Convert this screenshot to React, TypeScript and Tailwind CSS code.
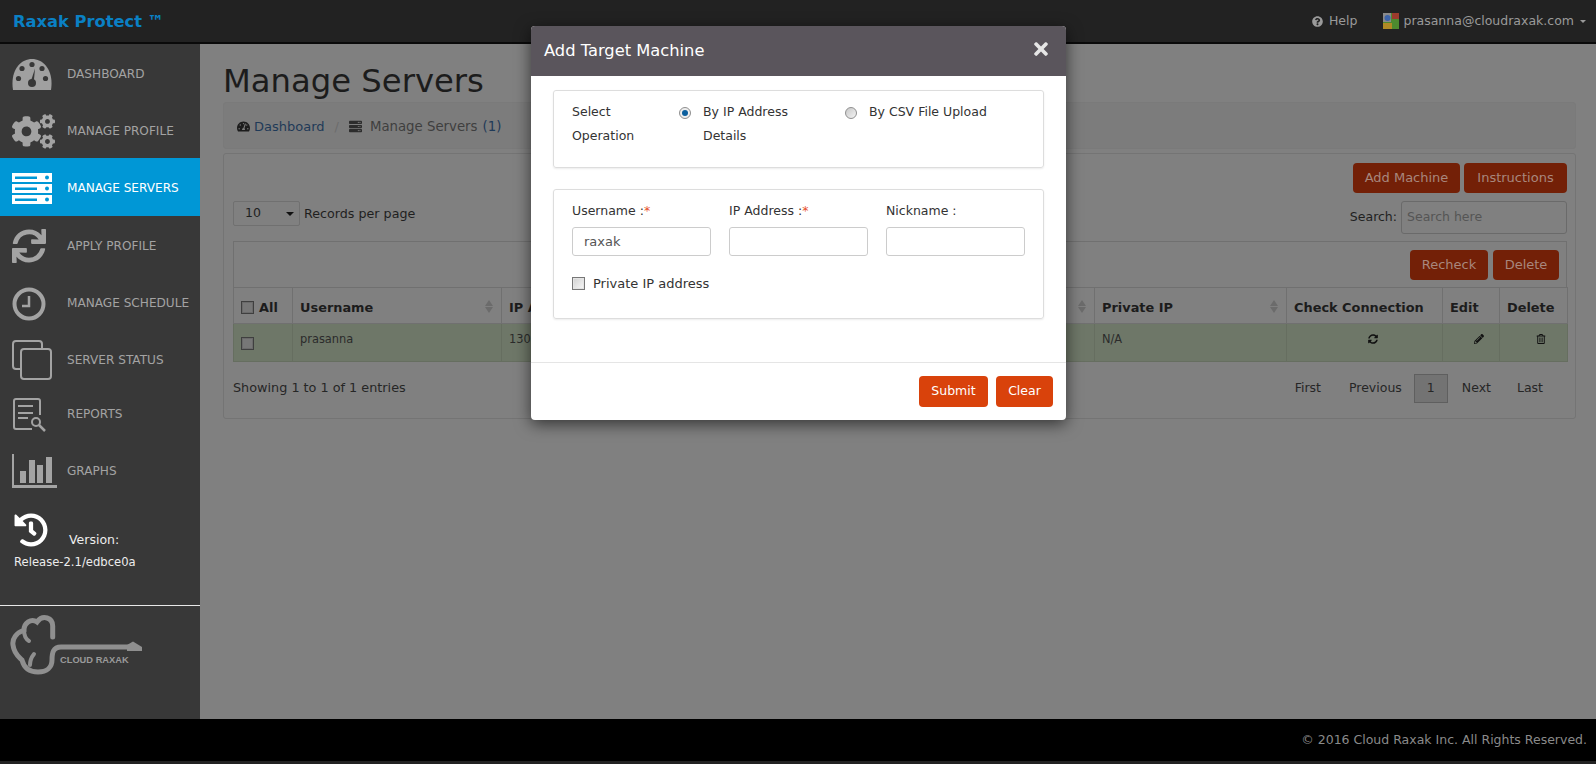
import type { ReactNode } from "react";
import {
  FaCogs,
  FaHistory,
  FaPencilAlt,
  FaQuestionCircle,
  FaRegTrashAlt,
  FaServer,
  FaSync,
  FaSyncAlt,
  FaTachometerAlt,
  FaTimes,
} from "react-icons/fa";

const GaugeIcon = () => (
  <svg width="40" height="31" viewBox="0 0 40 31">
    <path d="M1 31 C-2 12 8 0 20 0 C32 0 42 12 39 31 Z" fill="#a0a0a0" />
    <circle cx="20" cy="5.5" r="2.6" fill="#383838" />
    <circle cx="10" cy="9.5" r="2.6" fill="#383838" />
    <circle cx="30" cy="9.5" r="2.6" fill="#383838" />
    <circle cx="6.5" cy="19.5" r="2.6" fill="#383838" />
    <circle cx="33.5" cy="19.5" r="2.6" fill="#383838" />
    <circle cx="20" cy="24" r="4" fill="#383838" />
    <path d="M18.6 23 L23 9.5 L21.8 23 Z" fill="#383838" />
  </svg>
);

const ServersIcon = () => (
  <svg width="40" height="31" viewBox="0 0 40 31">
    {[0, 11, 22].map((y) => (
      <g key={y}>
        <rect x="0" y={y} width="40" height="9" fill="#fff" />
        <rect x="3" y={y + 3.5} width="22" height="2.5" fill="#0097d6" />
        <circle cx="35" cy={y + 4.5} r="2" fill="#0097d6" />
      </g>
    ))}
  </svg>
);

const ClockIcon = () => (
  <svg width="34" height="34" viewBox="0 0 34 34" fill="none" stroke="#a3a3a3">
    <circle cx="17" cy="17" r="14.5" strokeWidth="4" />
    <path d="M17 9 V19 H10" strokeWidth="2.5" />
  </svg>
);

const StatusIcon = () => (
  <svg width="40" height="40" viewBox="0 0 40 40" fill="none" stroke="#a3a3a3" strokeWidth="2">
    <path d="M8 29 H4 Q1 29 1 26 V4 Q1 1 4 1 H27 Q30 1 30 4 V9" />
    <rect x="9" y="9" width="30" height="30" rx="3" />
  </svg>
);

const ReportsIcon = () => (
  <svg width="34" height="34" viewBox="0 0 34 34" fill="none" stroke="#a3a3a3" strokeWidth="2">
    <path d="M20 31 H4 Q2 31 2 29 V3 Q2 1 4 1 H26 Q28 1 28 3 V17" />
    <path d="M6 8 H21 M6 15 H21 M6 20 H16" />
    <circle cx="24" cy="24" r="4" />
    <path d="M27 27 L33 33" strokeWidth="2.5" />
  </svg>
);

const GraphsIcon = () => (
  <svg width="45" height="34" viewBox="0 0 45 34" fill="#a3a3a3">
    <path d="M0 0 H2 V31 H45 V34 H0 Z" />
    <rect x="8" y="17" width="6" height="12" />
    <rect x="17" y="6" width="6" height="23" />
    <rect x="25" y="11" width="6" height="18" />
    <rect x="34" y="3" width="6" height="26" />
  </svg>
);

const CloudLogo = () => (
  <svg width="136" height="64" viewBox="0 0 136 64" fill="none">
    <path
      d="M42.7 23 V12 C42.7 4 33 0 27 8 C21 4 14 9 14 16 C6 19 2 25 3 31 C4 40 9 43 12 46 C14 54 20 58 28 58 C37 58 42 53 42 46 C42 39 43 33 51 33 H122"
      stroke="#8f8f8f"
      strokeWidth="5"
      strokeLinecap="round"
    />
    <path d="M14 16 Q14 24 19 27 M24 40 Q20 45 20 51" stroke="#8f8f8f" strokeWidth="4" strokeLinecap="round" />
    <path d="M117 31 L123 27.5 L132 33 V37 H117 Z" fill="#8f8f8f" />
    <text x="50" y="49" fill="#9a9a9a" fontSize="9.3" fontWeight="700" fontFamily="'Liberation Sans', sans-serif">
      CLOUD RAXAK
    </text>
  </svg>
);

const navItems: { label: string; icon: ReactNode; cls: string; active?: boolean }[] = [
  { label: "DASHBOARD", icon: <GaugeIcon />, cls: "h-[57px] pt-[4px]" },
  { label: "MANAGE PROFILE", icon: <FaCogs size={43} color="#a3a3a3" />, cls: "h-[57px] pt-[4px]" },
  { label: "MANAGE SERVERS", icon: <ServersIcon />, cls: "h-[58px] pt-[2px]", active: true },
  { label: "APPLY PROFILE", icon: <FaSync size={34} color="#a3a3a3" />, cls: "h-[58px] pt-[2px]" },
  { label: "MANAGE SCHEDULE", icon: <ClockIcon />, cls: "h-[57px] pt-[2px]" },
  { label: "SERVER STATUS", icon: <StatusIcon />, cls: "h-[56px] pt-[2px]" },
  { label: "REPORTS", icon: <ReportsIcon />, cls: "h-[53px] pt-[2px]" },
  { label: "GRAPHS", icon: <GraphsIcon />, cls: "h-[58px] pt-[4px]" },
];

const Box = ({ dim }: { dim?: boolean }) => (
  <span
    className={
      dim
        ? "inline-block w-[13px] h-[13px] border border-[#3f3f3f] bg-[#777] shadow-[inset_0_0_0_1px_#6a6a6a]"
        : "inline-block w-[13px] h-[13px] border border-[#777777] bg-gradient-to-br from-[#d0d0d0] to-[#f8f8f8] shadow-[inset_0_0_0_1px_#e4e4e4]"
    }
  />
);

const SortArrows = () => (
  <span className="absolute right-[8px] top-[12px] flex flex-col gap-[1px]">
    <span className="w-0 h-0 border-x-[4px] border-x-transparent border-b-[6px] border-b-[#6b6b6b]" />
    <span className="w-0 h-0 border-x-[4px] border-x-transparent border-t-[6px] border-t-[#6b6b6b]" />
  </span>
);

const DimButton = ({ children, cls }: { children: ReactNode; cls: string }) => (
  <button className={`h-[30px] rounded-[4px] bg-[#732007] text-[13px] text-[#a8877d] ${cls}`}>{children}</button>
);

const thCls = "relative border border-[#707070] px-[7px] pt-[5px] text-left text-[12.9px] font-bold text-[#1c1c1c]";
const tdCls = "border border-[#666e60] px-[7px] pt-[7px] align-top text-[11.4px] text-[#2b2b2b]";

export default function App() {
  return (
    <div className="relative flex h-[764px] w-[1596px] flex-col overflow-hidden bg-[#808080] font-['DejaVu_Sans',sans-serif] text-[12px]">
      <header className="flex h-[44px] shrink-0 items-center justify-between border-b-2 border-[#0a0a0a] bg-[#222222] pl-[13px] pr-[10px]">
        <span className="pt-[2px] text-[16.3px] font-bold text-[#0a80c4]">Raxak Protect ™</span>
        <div className="flex items-center text-[12px] text-[#9a9a9a]">
          <FaQuestionCircle size={11} color="#9a9a9a" />
          <span className="ml-[6px] text-[12.5px]">Help</span>
          <svg className="ml-[26px]" width="16" height="16" viewBox="0 0 16 16">
            <rect width="16" height="16" fill="#4d8a2f" />
            <rect x="9" width="7" height="6" fill="#9c3a2c" />
            <rect width="8" height="9" fill="#8a8a8a" />
            <circle cx="4.5" cy="5" r="3" fill="#3c63a8" />
            <rect y="10" width="9" height="6" fill="#b08a25" />
          </svg>
          <span className="ml-[4px] text-[12.5px]">prasanna@cloudraxak.com</span>
          <span className="ml-[6px] h-0 w-0 border-x-[3px] border-t-[3px] border-x-transparent border-t-[#9a9a9a]" />
        </div>
      </header>

      <div className="flex min-h-0 flex-1">
        <aside className="flex w-[200px] shrink-0 flex-col bg-[#383838]">
          {navItems.map((item) => (
            <div
              key={item.label}
              className={`flex items-center pl-[12px] ${item.cls} ${item.active ? "bg-[#0097d6] text-white" : "text-[#a3a3a3]"}`}
            >
              <span className="flex w-[55px] shrink-0 items-center">{item.icon}</span>
              <span className="text-[12.1px]">{item.label}</span>
            </div>
          ))}
          <div className="px-[14px] pt-[15px] text-[#ededed]">
            <div className="flex items-end">
              <FaHistory size={34} color="#fff" />
              <span className="ml-[21px] translate-y-[3px] text-[12.5px]">Version:</span>
            </div>
            <div className="mt-[7px] text-[11.6px]">Release-2.1/edbce0a</div>
          </div>
          <div className="mt-[34px] border-t border-[#e8e8e8] pl-[10px] pt-[8px]">
            <CloudLogo />
          </div>
        </aside>

        <main className="min-w-0 flex-1 pl-[23px] pr-[20px] text-[#1f1f1f]">
          <h1 className="mt-[16px] h-[42px] text-[32.25px] leading-[42px] text-[#1c1c1c]">Manage Servers</h1>
          <div className="flex h-[47px] items-center rounded-[3px] border border-[#7a7a7a] bg-[#7c7c7c] pl-[13px] pt-[2px] text-[13px]">
            <FaTachometerAlt size={13} color="#1c1c1c" />
            <span className="ml-[4px] text-[#1f3a58]">Dashboard</span>
            <span className="mx-[10px] text-[#6c6c6c]">/</span>
            <FaServer size={13} color="#2c2c2c" />
            <span className="ml-[8px] text-[13.3px] text-[#3f3f3f]">Manage Servers</span>
            <span className="ml-[5px] text-[13.3px] text-[#1f3a58]">(1)</span>
          </div>

          <section className="mt-[4px] h-[266px] rounded-[3px] border border-[#747474] pl-[9px] pr-[8px] pt-[9px]">
            <div className="flex justify-end gap-[4px]">
              <DimButton cls="w-[107px]">Add Machine</DimButton>
              <DimButton cls="w-[103px]">Instructions</DimButton>
            </div>
            <div className="mt-[8px] flex items-start justify-between">
              <div className="flex items-center">
                <span className="relative flex h-[25px] w-[67px] items-center rounded-[2px] border border-[#707070] pl-[11px] text-[12.5px]">
                  10
                  <span className="absolute right-[5px] top-[10px] h-0 w-0 border-x-[4px] border-t-[4px] border-x-transparent border-t-[#111]" />
                </span>
                <span className="ml-[4px] text-[12.7px]">Records per page</span>
              </div>
              <div className="flex items-center">
                <span className="mr-[4px] text-[12.5px]">Search:</span>
                <span className="flex h-[33px] w-[166px] items-center rounded-[3px] border border-[#6a6a6a] pl-[5px] text-[12.5px] text-[#555]">
                  Search here
                </span>
              </div>
            </div>

            <div className="mt-[7px] flex h-[46px] items-center justify-end gap-[5px] border border-b-0 border-[#707070] pr-[7px]">
              <DimButton cls="w-[78px]">Recheck</DimButton>
              <DimButton cls="w-[66px]">Delete</DimButton>
            </div>
            <table className="w-[1334px] table-fixed border-collapse">
              <thead>
                <tr className="h-[36px]">
                  <th className={`${thCls} w-[59px]`}>
                    <span className="flex items-center gap-[5px]">
                      <Box dim />
                      All
                    </span>
                  </th>
                  <th className={`${thCls} w-[209px]`}>
                    Username
                    <SortArrows />
                  </th>
                  <th className={`${thCls} w-[593px]`}>
                    IP Address
                    <SortArrows />
                  </th>
                  <th className={`${thCls} w-[192px]`}>
                    Private IP
                    <SortArrows />
                  </th>
                  <th className={`${thCls} w-[156px]`}>Check Connection</th>
                  <th className={`${thCls} w-[57px]`}>Edit</th>
                  <th className={`${thCls} w-[68px]`}>Delete</th>
                </tr>
              </thead>
              <tbody>
                <tr className="h-[38px] bg-[#6e7768]">
                  <td className={tdCls}>
                    <span className="mt-[6px] flex">
                      <Box dim />
                    </span>
                  </td>
                  <td className={tdCls}>prasanna</td>
                  <td className={tdCls}>130</td>
                  <td className={tdCls}>N/A</td>
                  <td className={tdCls}>
                    <span className="mt-[3px] flex justify-center pl-[16px]">
                      <FaSyncAlt size={10} color="#111" />
                    </span>
                  </td>
                  <td className={tdCls}>
                    <span className="mt-[3px] flex justify-end pr-[8px]">
                      <FaPencilAlt size={10} color="#111" />
                    </span>
                  </td>
                  <td className={tdCls}>
                    <span className="mt-[3px] flex justify-end pr-[14px]">
                      <FaRegTrashAlt size={10} color="#111" />
                    </span>
                  </td>
                </tr>
              </tbody>
            </table>
            <div className="mt-[12px] flex items-center justify-between text-[12.8px]">
              <span className="pb-[2px] text-[#262626]">Showing 1 to 1 of 1 entries</span>
              <div className="flex items-center text-[12.5px] text-[#262626]">
                <span>First</span>
                <span className="ml-[28px]">Previous</span>
                <span className="ml-[12px] flex h-[29px] w-[34px] items-center justify-center border border-[#5f5f5f] bg-[#737373]">
                  1
                </span>
                <span className="ml-[14px]">Next</span>
                <span className="ml-[26px] mr-[24px]">Last</span>
              </div>
            </div>
          </section>
        </main>
      </div>

      <footer className="flex h-[42px] shrink-0 items-center justify-end bg-black pr-[9px] text-[12.5px] text-[#8a8a8a]">
        © 2016 Cloud Raxak Inc. All Rights Reserved.
      </footer>
      <div className="h-[3px] shrink-0 bg-[#222222]" />

      {/* modal over the page */}
      <div className="absolute left-[531px] top-[26px] h-[394px] w-[535px] overflow-hidden rounded-[4px] bg-white text-[12.5px] text-[#333] shadow-[0_4px_16px_rgba(0,0,0,0.6)]">
        <div className="flex h-[50px] items-center justify-between bg-[#5a555c] pl-[13px] pr-[15px]">
          <span className="text-[16.3px] text-white">Add Target Machine</span>
          <FaTimes className="-translate-y-[2px]" size={20} color="#e6e6e6" />
        </div>
        <div className="px-[22px] pt-[14px]">
          <div className="h-[78px] rounded-[3px] border border-[#dddddd] shadow-[0_1px_2px_rgba(0,0,0,0.08)] pl-[18px] pt-[9px] leading-[24px]">
            <div className="flex">
              <div className="w-[107px] shrink-0">
                Select
                <br />
                Operation
              </div>
              <div className="flex w-[166px] shrink-0">
                <span className="mr-[12px] mt-[7px] flex h-[12px] w-[12px] shrink-0 items-center justify-center rounded-full border border-[#8f8f8f] bg-[#eee]">
                  <span className="h-[6px] w-[6px] rounded-full bg-[#0b5f9e]" />
                </span>
                <span>
                  By IP Address
                  <br />
                  Details
                </span>
              </div>
              <div className="flex">
                <span className="mr-[12px] mt-[7px] h-[12px] w-[12px] shrink-0 rounded-full border border-[#8f8f8f] bg-gradient-to-br from-[#c8c8c8] to-[#f4f4f4]" />
                <span>By CSV File Upload</span>
              </div>
            </div>
          </div>

          <div className="mt-[21px] h-[130px] rounded-[3px] border border-[#dddddd] shadow-[0_1px_2px_rgba(0,0,0,0.08)] px-[18px] pt-[12px]">
            <div className="grid grid-cols-[139px_139px_139px] gap-x-[18px]">
              {[
                { label: "Username :", req: true, value: "raxak" },
                { label: "IP Address :", req: true, value: "" },
                { label: "Nickname :", req: false, value: "" },
              ].map((f) => (
                <div key={f.label}>
                  <div className="h-[25px] leading-[18px]">
                    {f.label}
                    {f.req && <span className="text-[#e8502a]">*</span>}
                  </div>
                  <div className="flex h-[29px] items-center rounded-[3px] border border-[#cccccc] pl-[11px] text-[13px] text-[#555]">
                    {f.value}
                  </div>
                </div>
              ))}
            </div>
            <div className="mt-[18px] flex items-center gap-[8px]">
              <Box />
              <span className="text-[13px]">Private IP address</span>
            </div>
          </div>
        </div>
        <div className="mt-[43px] flex h-[57px] items-start justify-end gap-[8px] border-t border-[#e5e5e5] pr-[13px] pt-[13px]">
          <button className="h-[31px] w-[69px] rounded-[4px] bg-[#d9420b] text-[12.5px] text-white">Submit</button>
          <button className="h-[31px] w-[57px] rounded-[4px] bg-[#d9420b] text-[12.5px] text-white">Clear</button>
        </div>
      </div>
    </div>
  );
}
